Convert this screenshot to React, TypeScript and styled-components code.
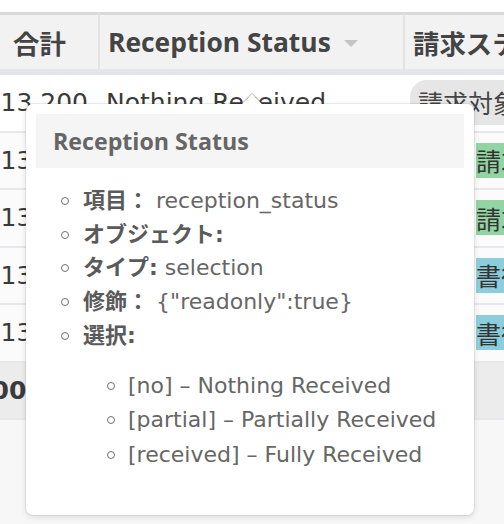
import React from "react";
import styled, { createGlobalStyle } from "styled-components";

const GlobalStyle = createGlobalStyle`
  html, body { margin: 0; padding: 0; background: #ffffff; }
  body { font-family: "DejaVu Sans", "Noto Sans CJK JP", sans-serif; }
`;

const Page = styled.div`
  position: relative;
  width: 504px;
  height: 524px;
  overflow: hidden;
  background: #f7f7f7;
  padding-top: 12px;
  box-sizing: border-box;
  background-image: linear-gradient(#ffffff, #ffffff);
  background-size: 100% 12px;
  background-repeat: no-repeat;
`;

const Table = styled.div`
  display: grid;
  grid-template-columns: 98px 305px 200px;
  font-family: "DejaVu Sans", "Noto Sans CJK JP", sans-serif;
  font-size: 25px;
  color: #3a3a3a;
`;

const HeaderCell = styled.div<{ $first?: boolean }>`
  height: 54px;
  display: flex;
  align-items: center;
  gap: 13px;
  padding-left: ${(p) => (p.$first ? "13px" : "8px")};
  background: #f2f2f2;
  border-top: 3px solid #d9d9d9;
  border-bottom: 6px solid #e3e5e9;
  border-left: ${(p) => (p.$first ? "none" : "2px solid #e3e3e3")};
  font-family: "Open Sans", "Noto Sans CJK JP", sans-serif;
  font-size: 26.4px;
  font-weight: bold;
  color: #444;
  white-space: nowrap;
  overflow: hidden;
  box-sizing: content-box;
`;

const SortArrow = styled.span`
  flex: none;
  width: 0;
  height: 0;
  border-left: 7px solid transparent;
  border-right: 7px solid transparent;
  border-top: 7px solid #c4c4c4;
  margin-top: 2px;
`;

const Cell = styled.div<{ $bg?: string; $bold?: boolean }>`
  height: 55.5px;
  display: flex;
  align-items: center;
  padding: 0 8px 0 10px;
  background: ${(p) => p.$bg || "#fbfbfb"};
  border-bottom: 2px solid #e6e8eb;
  white-space: nowrap;
  overflow: hidden;
  font-weight: ${(p) => (p.$bold ? "bold" : "normal")};
  box-sizing: content-box;
`;

const TextCell = styled(Cell)`
  padding-left: 8px;
`;

const NumCell = styled(Cell)`
  justify-content: flex-end;
  padding: 0 10px 0 0;
`;

const Pill = styled.span`
  background: #e6e6e6;
  border-radius: 17px;
  padding: 4px 10px 5px 8px;
  margin-left: -3px;
  color: #444;
`;

const Tag = styled.span<{ $color: string }>`
  flex: none;
  background: ${(p) => p.$color};
  margin-left: 63px;
  height: 35px;
  display: flex;
  align-items: center;
  padding: 0 6px 0 0;
  color: #333;
`;

const Popover = styled.div`
  position: absolute;
  left: 26px;
  top: 104px;
  width: 448px;
  height: 411px;
  background: #ffffff;
  border-radius: 7px;
  box-shadow: 0 0 0 1px rgba(0, 0, 0, 0.06), 0 2px 6px rgba(0, 0, 0, 0.12);
  padding: 10px;
  box-sizing: border-box;
  color: #666;
  font-family: "DejaVu Sans", "Noto Sans CJK JP", sans-serif;
`;

const Caret = styled.div`
  position: absolute;
  left: 215px;
  top: -13px;
  width: 22px;
  height: 13px;
  overflow: hidden;
  &::after {
    content: "";
    position: absolute;
    left: 3.5px;
    top: 6px;
    width: 14px;
    height: 14px;
    background: #ffffff;
    transform: rotate(45deg);
    box-shadow: 0 0 0 1px rgba(0, 0, 0, 0.25);
  }
`;

const PopTitle = styled.div`
  height: 54px;
  display: flex;
  align-items: center;
  padding-left: 17px;
  background: #f5f5f5;
  font-family: "Open Sans", "Noto Sans CJK JP", sans-serif;
  font-size: 23.2px;
  font-weight: bold;
  color: #666;
`;

const List = styled.ul<{ $nested?: boolean }>`
  list-style: none;
  margin: 16px 0 0 0;
  padding: 0 0 0 ${(p) => (p.$nested ? "45px" : "47px")};
  font-size: 22px;
`;

const Item = styled.li<{ $nested?: boolean }>`
  position: relative;
  line-height: ${(p) => (p.$nested ? "34.5px" : "33.7px")};
  white-space: nowrap;
  &::before {
    content: "";
    position: absolute;
    left: ${(p) => (p.$nested ? "-21px" : "-22px")};
    top: 13px;
    width: 6px;
    height: 6px;
    border: 1.2px solid #707070;
    border-radius: 50%;
  }
`;

const Label = styled.b`
  font-weight: bold;
  color: #5a5a5a;
`;

export default function App() {
  return (
    <>
      <GlobalStyle />
      <Page>
        <Table>
          <HeaderCell $first>合計</HeaderCell>
          <HeaderCell>
            Reception Status <SortArrow />
          </HeaderCell>
          <HeaderCell>請求ステータス</HeaderCell>

          <NumCell $bg="#ffffff">13,200</NumCell>
          <TextCell $bg="#ffffff">Nothing Received</TextCell>
          <Cell $bg="#ffffff"><Pill>請求対象外</Pill></Cell>

          <NumCell>13,200</NumCell>
          <TextCell>Partially Received</TextCell>
          <Cell><Tag $color="#93d4a3">請求書発行済</Tag></Cell>

          <NumCell>13,200</NumCell>
          <TextCell>Partially Received</TextCell>
          <Cell><Tag $color="#93d4a3">請求書発行済</Tag></Cell>

          <NumCell>13,200</NumCell>
          <TextCell>Fully Received</TextCell>
          <Cell><Tag $color="#8dcedc">書待ち</Tag></Cell>

          <NumCell>13,200</NumCell>
          <TextCell>Fully Received</TextCell>
          <Cell><Tag $color="#8dcedc">書待ち</Tag></Cell>

          <NumCell $bg="#ececec" $bold>1,300,000</NumCell>
          <Cell $bg="#ececec"></Cell>
          <Cell $bg="#ececec"></Cell>
        </Table>

        <Popover>
          <Caret />
          <PopTitle>Reception Status</PopTitle>
          <List>
            <Item><Label>項目：</Label> reception_status</Item>
            <Item><Label>オブジェクト:</Label></Item>
            <Item><Label>タイプ:</Label> selection</Item>
            <Item><Label>修飾：</Label> {'{"readonly":true}'}</Item>
            <Item>
              <Label>選択:</Label>
              <List $nested>
                <Item $nested>[no] – Nothing Received</Item>
                <Item $nested>[partial] – Partially Received</Item>
                <Item $nested>[received] – Fully Received</Item>
              </List>
            </Item>
          </List>
        </Popover>
      </Page>
    </>
  );
}
